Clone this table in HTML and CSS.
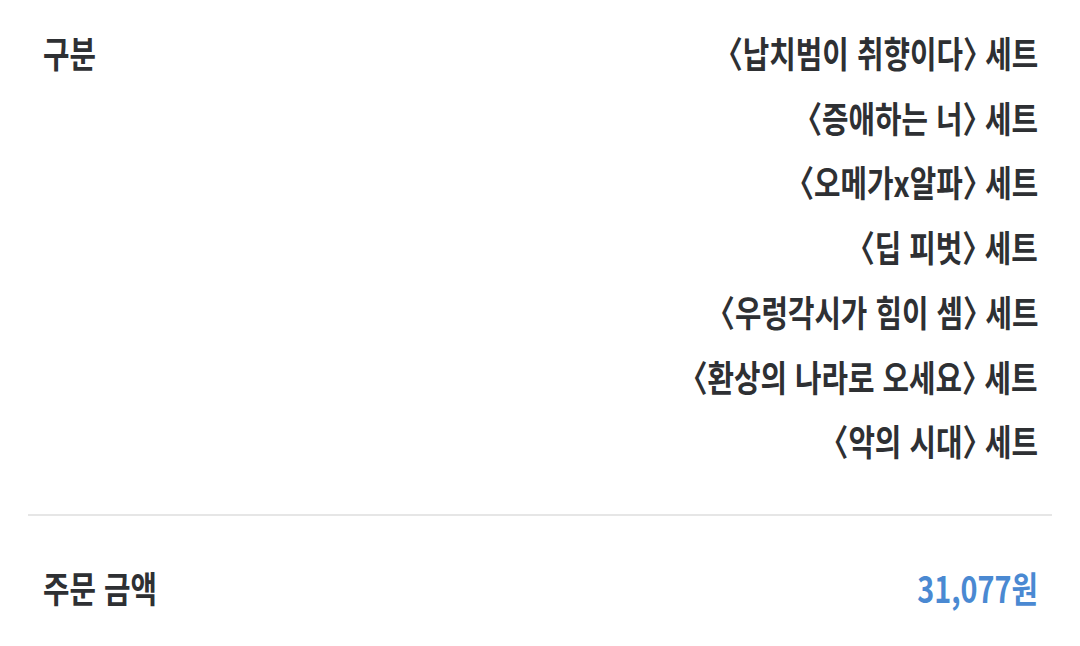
FILE: index.html
```html
<!DOCTYPE html>
<html lang="ko">
<head>
<meta charset="utf-8">
<link rel="stylesheet" href="styles.css">
</head>
<body>
<div class="page">
  <div class="block top">
    <div class="row">
      <div class="label"><span class="t">구분</span></div>
      <ul class="items">
        <li><span class="t">〈납치범이 취향이다〉 세트</span></li>
        <li><span class="t">〈증애하는 너〉 세트</span></li>
        <li><span class="t">〈오메가x알파〉 세트</span></li>
        <li><span class="t">〈딥 피벗〉 세트</span></li>
        <li><span class="t">〈우렁각시가 힘이 셈〉 세트</span></li>
        <li><span class="t">〈환상의 나라로 오세요〉 세트</span></li>
        <li><span class="t">〈악의 시대〉 세트</span></li>
      </ul>
    </div>
  </div>
  <div class="divider"></div>
  <div class="block">
    <div class="row total">
      <div class="label"><span class="t">주문 금액</span></div>
      <div class="price"><span class="t">31,077원</span></div>
    </div>
  </div>
</div>
</body>
</html>
```

FILE: styles.css
```css
html, body {
  margin: 0;
  padding: 0;
  background: #ffffff;
}
.page {
  width: 1080px;
  height: 646px;
  font-family: "Noto Sans CJK KR", "Noto Sans", sans-serif;
  font-weight: 700;
  color: #2e3033;
}
.block {
  padding: 0 42px 0 43px;
}
.block.top {
  padding-top: 20px;
  padding-bottom: 41px;
}
.row {
  display: flex;
  justify-content: space-between;
  align-items: flex-start;
}
.label,
.items li,
.price {
  font-size: 36px;
  line-height: 64.7px;
}
.t {
  display: inline-block;
  white-space: nowrap;
  transform: scaleX(0.8);
  font-feature-settings: "halt" 1;
}
.label .t {
  transform-origin: left center;
}
.items {
  list-style: none;
  margin: 0;
  padding: 0;
  text-align: right;
}
.items .t,
.price .t {
  transform-origin: right center;
}
.divider {
  margin: 0 28px;
  height: 2px;
  background: #e6e6e6;
}
.total {
  padding-top: 39px;
}
.price {
  color: #4a89d2;
}
```
